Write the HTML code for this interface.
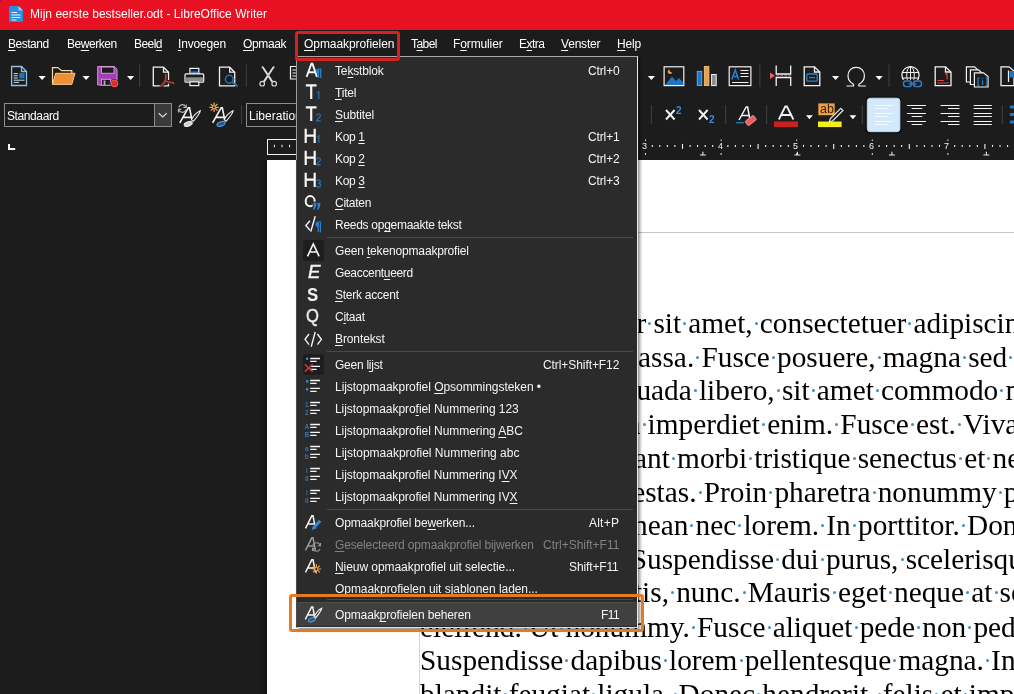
<!DOCTYPE html>
<html><head><meta charset="utf-8"><title>LibreOffice Writer</title>
<style>
*{margin:0;padding:0;box-sizing:border-box}
html,body{width:1014px;height:694px;overflow:hidden;background:#1c1c1c}
body{position:relative;font-family:"Liberation Sans",sans-serif;font-size:12px;color:#fff}
.abs{position:absolute}
.t{will-change:transform;position:absolute;white-space:pre;line-height:14px;height:14px;color:#fff;font-size:12px}
.t u{text-decoration:underline;text-decoration-thickness:1.2px;text-underline-offset:2.2px}
svg{position:absolute;overflow:visible}
#title{left:0;top:0;width:1014px;height:30px;background:#e81123}
#page{left:267px;top:160px;width:760px;height:540px;background:#fff}
.dl{will-change:transform;position:absolute;left:420px;white-space:pre;font-family:"Liberation Serif",serif;font-size:29.33px;line-height:34px;height:34px;color:#000}
.dl i{display:inline-block;width:7.2px;height:0;position:relative;vertical-align:baseline}
.dl i:after{content:"";position:absolute;left:2.1px;top:-10.9px;width:3px;height:3px;border-radius:50%;background:#3f8fc4}
#menu{left:295.5px;top:56px;width:342.5px;height:572px;background:#2b2b2b;border:1px solid;border-color:#a8a8a8 #ececec #e2e2e2 #4a4a4a;box-shadow:2px 2px 3px rgba(0,0,0,.45)}
.sep{position:absolute;height:1px;background:#4a4a4a;left:327px;width:306px}
.vsep{position:absolute;width:1px;background:#4a4a4a}
.arr{position:absolute;width:0;height:0;border-left:3.5px solid transparent;border-right:3.5px solid transparent;border-top:4px solid #fff}
</style></head>
<body>
<div class="abs" id="title"></div>
<svg style="left:0;top:0" width="40" height="30" viewBox="0 0 40 30">
<path d="M10.5 6 H18.5 L23 10.5 V20.5 a1.5 1.5 0 0 1 -1.5 1.5 H10.5 a1.5 1.5 0 0 1 -1.5 -1.5 V7.5 a1.5 1.5 0 0 1 1.5 -1.5Z" fill="#2a8fe0"/>
<path d="M18.5 6 L23 10.5 H19.5 a1 1 0 0 1 -1 -1Z" fill="#9fd0f5"/>
<path d="M11.5 12.5H17 M11.5 15H20.5 M11.5 17.5H20.5 M11.5 20H16.5" stroke="#e8f4ff" stroke-width="1.2"/>
</svg>
<span class="t" id="t1" style="left:30.0px;top:7.44px;letter-spacing:0.015px;">Mijn eerste bestseller.odt - LibreOffice Writer</span>
<span class="t" id="t2" style="left:8.4px;top:36.54px;letter-spacing:-0.491px;"><u>B</u>estand</span>
<span class="t" id="t3" style="left:66.7px;top:36.54px;letter-spacing:-0.470px;">Be<u>w</u>erken</span>
<span class="t" id="t4" style="left:133.8px;top:36.54px;letter-spacing:-0.550px;">Beel<u>d</u></span>
<span class="t" id="t5" style="left:178.2px;top:36.54px;letter-spacing:-0.170px;"><u>I</u>nvoegen</span>
<span class="t" id="t6" style="left:242.8px;top:36.54px;letter-spacing:-0.355px;"><u>O</u>pmaak</span>
<span class="t" id="t7" style="left:303.5px;top:36.54px;letter-spacing:-0.065px;"><u>O</u>pmaakprofielen</span>
<span class="t" id="t8" style="left:410.7px;top:36.54px;letter-spacing:-0.550px;">T<u>a</u>bel</span>
<span class="t" id="t9" style="left:453.3px;top:36.54px;letter-spacing:-0.125px;">F<u>o</u>rmulier</span>
<span class="t" id="t10" style="left:519.0px;top:36.54px;letter-spacing:-0.508px;">E<u>x</u>tra</span>
<span class="t" id="t11" style="left:560.5px;top:36.54px;letter-spacing:-0.201px;"><u>V</u>enster</span>
<span class="t" id="t12" style="left:616.6px;top:36.54px;letter-spacing:-0.196px;"><u>H</u>elp</span>
<svg style="left:0;top:0" width="1014" height="160" viewBox="0 0 1014 160" fill="none">
<!-- ===== toolbar 1 ===== -->
<!-- new doc -->
<path d="M11.6 66.5H21.5L26.5 71.5V85.5H11.6Z" stroke="#8fbfe8" stroke-width="1.3"/>
<path d="M21.5 66.5V71.5H26.5" stroke="#8fbfe8" stroke-width="1.3"/>
<path d="M13.6 73.6H17.8M13.6 75.8H17.8M13.6 78H17.8M13.6 80.2H24.6M13.6 82.4H19" stroke="#c5dcf2" stroke-width="1"/>
<rect x="19.2" y="73" width="5.4" height="5.4" fill="#1f74c4"/>
<path d="M38.5 76H45.7L42.1 80Z" fill="#fff"/>
<!-- folder -->
<path d="M52.5 84.4V67.6H57.8L61.6 70.6H71.8V73.3" stroke="#f5d9a8" stroke-width="1.2"/>
<path d="M55.6 73.3H75L71.8 84.4H52.5Z" fill="#ee8e35" stroke="#f5c98a" stroke-width="1"/>
<path d="M82.5 76H89.7L86.1 80Z" fill="#fff"/>
<!-- save -->
<path d="M97.7 66.5H114.3L117 69.2V85H97.7Z" fill="#a33fb5" stroke="#d29add" stroke-width="1"/>
<rect x="101.4" y="67" width="12.6" height="6.3" fill="#1c1c1c" stroke="#d29add" stroke-width="1"/>
<rect x="101.4" y="79.3" width="9" height="6" fill="#1c1c1c" stroke="#d29add" stroke-width="1"/>
<rect x="103.6" y="80.5" width="1.8" height="4.5" fill="#d29add"/>
<circle cx="114.5" cy="83.5" r="4.3" fill="#1c1c1c"/>
<circle cx="114.5" cy="83.5" r="3.4" fill="#e02a26" stroke="#f07a75" stroke-width=".7"/>
<path d="M127 76H134.2L130.6 80Z" fill="#fff"/>
<path d="M139.7 64.5V87" stroke="#404040" stroke-width="1"/>
<!-- export pdf -->
<path d="M153.3 67.2H163.5L168.5 72.2V85.8H153.3Z" stroke="#f2f2f2" stroke-width="1.3"/>
<path d="M163.5 67.2V72.2H168.5" stroke="#f2f2f2" stroke-width="1.3"/>
<path d="M165.7 74.8C166.3 77.5 165.6 79.8 165 81.2C163.8 83.6 162 85.6 160.3 86.1M165 81.2C167.5 81.6 171 82 173.6 83.2M165 81.2C163 82 161.5 83.2 160.3 84.6" stroke="#1c1c1c" stroke-width="3.6"/>
<path d="M165.7 74.8C166.3 77.5 165.6 79.8 165 81.2C163.8 83.6 162 85.6 160.3 86.1M165 81.2C167.5 81.6 171 82 173.6 83.2" stroke="#b03a35" stroke-width="1.9" stroke-linecap="round"/>
<!-- printer -->
<rect x="189.9" y="68.4" width="8.9" height="6" fill="#1c1c1c" stroke="#f2f2f2" stroke-width="1.2"/>
<rect x="190.5" y="71.5" width="7.7" height="3" fill="#2e86d2"/>
<rect x="185" y="73.9" width="18.7" height="8.3" rx="1" fill="#1c1c1c" stroke="#f2f2f2" stroke-width="1.2"/>
<rect x="185.6" y="77.3" width="17.5" height="4.3" fill="#8c8c8c"/>
<rect x="189.9" y="81.8" width="8.9" height="3.8" fill="#1c1c1c" stroke="#f2f2f2" stroke-width="1.2"/>
<!-- preview -->
<path d="M219.5 67.2H229.7L234.7 72.2V85.8H219.5Z" stroke="#f2f2f2" stroke-width="1.3"/>
<path d="M229.7 67.2V72.2H234.7" stroke="#f2f2f2" stroke-width="1.3"/>
<circle cx="229.3" cy="79.2" r="5" fill="#1c1c1c"/>
<circle cx="229.3" cy="79.2" r="3.9" stroke="#2f6ea6" stroke-width="1.6" fill="#1c1c1c"/>
<path d="M232.2 82.1L237.7 86.6" stroke="#2f6ea6" stroke-width="1.9"/>
<path d="M246.3 64.5V87" stroke="#404040" stroke-width="1"/>
<!-- scissors -->
<path d="M261.8 66.8L263.2 66.8L272.8 81.2L271.6 82Z M274.4 66.8L273 66.8L263.4 81.2L264.6 82Z" fill="#ececec" stroke="#ececec" stroke-width=".6"/>
<circle cx="262.2" cy="83.7" r="2.3" stroke="#d4d4d4" stroke-width="1.2"/>
<circle cx="274.2" cy="83.7" r="2.3" stroke="#d4d4d4" stroke-width="1.2"/>
<!-- copy (partial) -->
<path d="M290.5 66.5H300V79H290.5Z" stroke="#f2f2f2" stroke-width="1.2"/>
<path d="M292.5 70H297M292.5 73H297M292.5 76H297" stroke="#f2f2f2" stroke-width="1"/>
<!-- right side -->
<path d="M647.8 76H655L651.4 80Z" fill="#fff"/>
<!-- image -->
<rect x="664.1" y="66.8" width="19.7" height="18.8" stroke="#f2f2f2" stroke-width="1.2"/>
<path d="M665 85L672 76.5L676 81L679 78L683.2 82.5V85Z" fill="#1f74c4"/>
<path d="M669.5 69.5a2.3 2.3 0 1 0 2.8 2.8a2.6 2.6 0 0 1 -2.8 -2.8Z" fill="#f0a050"/>
<!-- chart -->
<rect x="697.2" y="71.3" width="4.6" height="14.3" fill="#1f74c4" stroke="#7fb6e8" stroke-width=".8"/>
<rect x="704.3" y="66.4" width="4.6" height="19.2" fill="#f09e44" stroke="#f5c98a" stroke-width=".8"/>
<rect x="711.6" y="74.5" width="4.6" height="11.1" fill="#8a8a8a" stroke="#f2f2f2" stroke-width="1"/>
<!-- textbox -->
<rect x="729.2" y="66.8" width="21.7" height="18.8" stroke="#f2f2f2" stroke-width="1.2"/>
<path d="M731.8 79.5L735.2 70L738.6 79.5M733 76.5H737.4" stroke="#2e7fca" stroke-width="1.5"/>
<path d="M740.5 70.5H748.5M740.5 73.5H748.5M740.5 76.5H748.5M732 82.5H748.5" stroke="#f2f2f2" stroke-width="1"/>
<path d="M759.9 64.5V87" stroke="#404040" stroke-width="1"/>
<!-- page break -->
<path d="M776.2 65.5V74H790.7V65.5M776.2 86V77.5H790.7V86" stroke="#f2f2f2" stroke-width="1.3"/>
<path d="M776.5 75.75H791" stroke="#e0605c" stroke-width="1" stroke-dasharray="2.5 1.5"/>
<path d="M770 72.5L775 75.75L770 79Z" fill="#e9605c"/>
<!-- field -->
<path d="M804.2 66.8H814.5L819.8 72V85.6H804.2Z" stroke="#f2f2f2" stroke-width="1.3"/>
<path d="M814.5 66.8V72H819.8" stroke="#f2f2f2" stroke-width="1.3"/>
<rect x="806.8" y="74" width="10.4" height="7.2" rx="1" stroke="#2e7fca" stroke-width="1.3"/>
<path d="M809 77.6H815" stroke="#2e7fca" stroke-width="1.3"/>
<path d="M832 76H839.2L835.6 80Z" fill="#fff"/>
<!-- omega -->
<path d="M846.5 86H853.5V84.2C849.5 82.2 848 79 848 75.8C848 70.5 851.5 67.3 856.2 67.3C860.9 67.3 864.4 70.5 864.4 75.8C864.4 79 862.9 82.2 858.9 84.2V86H865.9" stroke="#f2f2f2" stroke-width="1.2"/>
<path d="M875.5 76H882.7L879.1 80Z" fill="#fff"/>
<path d="M889 64.5V87" stroke="#404040" stroke-width="1"/>
<!-- hyperlink globe -->
<circle cx="910.5" cy="75.2" r="8.6" stroke="#f2f2f2" stroke-width="1.2"/>
<ellipse cx="910.5" cy="75.2" rx="3.8" ry="8.6" stroke="#f2f2f2" stroke-width="1"/>
<path d="M910.5 66.6V83.8M902 72.5H919M902 78H919" stroke="#f2f2f2" stroke-width="1"/>
<rect x="901.5" y="79.8" width="21" height="8.2" fill="#1c1c1c"/>
<rect x="903.5" y="81" width="8" height="5.6" rx="2.5" stroke="#2e7fca" stroke-width="1.4"/>
<rect x="913.5" y="81" width="8" height="5.6" rx="2.5" stroke="#2e7fca" stroke-width="1.4"/>
<path d="M908.5 83.8H916.5" stroke="#2e7fca" stroke-width="1.4"/>
<!-- footnote -->
<path d="M935.2 66.8H945.5L951 72V85.6H935.2Z" stroke="#f2f2f2" stroke-width="1.3"/>
<path d="M945.5 66.8V72H951" stroke="#f2f2f2" stroke-width="1.3"/>
<path d="M945.2 74.5L947 73.5V79.5" stroke="#d9433e" stroke-width="1.2"/>
<path d="M937.5 80.5H944M937.5 83H948.8" stroke="#d9433e" stroke-width="1"/>
<!-- endnote -->
<path d="M966.4 66.8H974.5L978 70V82H966.4Z" stroke="#f2f2f2" stroke-width="1.2" fill="#1c1c1c"/>
<path d="M970.4 69.8H978.5L982 73V84.5H970.4Z" stroke="#f2f2f2" stroke-width="1.2" fill="#1c1c1c"/>
<path d="M974.4 72.8H983.5L988 76.5V87H974.4Z" stroke="#f2f2f2" stroke-width="1.2" fill="#1c1c1c"/>
<path d="M979.5 78H978V85.5H979.5M985.5 78H987V85.5H985.5M982.5 80.5V85M982.5 78V79" stroke="#2e7fca" stroke-width="1.2"/>
<!-- cross-ref partial -->
<path d="M1001 66.8H1009L1014 71V85.6H1001Z" stroke="#f2f2f2" stroke-width="1.3"/>
<path d="M1008.5 70.5V82" stroke="#f2f2f2" stroke-width="1.2"/>
<path d="M1009.5 71H1014V77.5H1009.5Z" fill="#1f74c4"/>

<!-- ===== toolbar 2 ===== -->
<rect x="4.5" y="103.5" width="167" height="23" stroke="#8c8c8c" stroke-width="1" fill="#1c1c1c"/>
<rect x="154.5" y="103.5" width="17" height="23" stroke="#8c8c8c" stroke-width="1" fill="#3a3a3a"/>
<path d="M158.7 113.2L162.7 117L166.7 113.2" stroke="#d8d8d8" stroke-width="1.2"/>
<!-- update style -->
<path d="M179.8 122.8L188.3 107.8H189.5 L191.9 119.6M183 117.4H191.4" stroke="#f4f4f4" stroke-width="1.6"/>
<path d="M191.4 119.7C193.2 116 197.2 112.2 200.3 110.7C199.9 113.8 195.9 118.3 193.2 121.3Z" stroke="#f4f4f4" stroke-width="1.1" fill="#1c1c1c"/>
<ellipse cx="188.2" cy="123.9" rx="4.2" ry="2.1" transform="rotate(-20 188.2 123.9)" fill="#d0d0d0" stroke="#efefef" stroke-width="1.1"/>
<path d="M185.6 106.6A3.7 3.7 0 0 0 178.8 107.3M179 110.2A3.7 3.7 0 0 0 185.9 109.6" stroke="#b4b4b4" stroke-width="1.2"/>
<path d="M186.3 104.4V107.4H183.3M178.4 112.4V109.4H181.4" stroke="#b4b4b4" stroke-width="1.1"/>
<!-- new style -->
<path d="M212.6 122.8L221.1 107.8H222.3 L224.7 119.6M215.8 117.4H224.2" stroke="#f4f4f4" stroke-width="1.6"/>
<path d="M224.2 119.7C226 116 230 112.2 233.1 110.7C232.7 113.8 228.7 118.3 226 121.3Z" stroke="#f4f4f4" stroke-width="1.1" fill="#1c1c1c"/>
<ellipse cx="221" cy="123.9" rx="4.2" ry="2.1" transform="rotate(-20 221 123.9)" fill="#1c568f" stroke="#5a9ede" stroke-width="1.1"/>
<path d="M214.1 102.6V112M209.4 107.3H218.8M210.8 104L217.4 110.6M217.4 104L210.8 110.6" stroke="#e8a05a" stroke-width="1.3"/>
<circle cx="214.1" cy="107.3" r="1.1" fill="#5a3010"/>
<path d="M241.5 105V124" stroke="#404040" stroke-width="1"/>
<rect x="246.5" y="103.5" width="120" height="23" stroke="#8c8c8c" stroke-width="1" fill="#1c1c1c"/>
<!-- right side -->
<path d="M651.4 105V124" stroke="#404040" stroke-width="1"/>
<path d="M725.7 105V124" stroke="#404040" stroke-width="1"/>
<path d="M766.6 105V124" stroke="#404040" stroke-width="1"/>
<path d="M862.3 105V124" stroke="#404040" stroke-width="1"/>
<path d="M1002.3 105V124" stroke="#404040" stroke-width="1"/>
<!-- x2 -->
<path d="M666 110L674.6 119.5M674.6 110L666 119.5" stroke="#f2f2f2" stroke-width="1.9"/>
<path d="M699 110L707.6 119.5M707.6 110L699 119.5" stroke="#f2f2f2" stroke-width="1.9"/>
<!-- clear formatting -->
<path d="M739 120L746.2 107H747.6L750 120M741.8 115.5H749.3" stroke="#f2f2f2" stroke-width="1.5"/>
<path d="M736.2 122.7H744" stroke="#2e7fca" stroke-width="1.3"/>
<rect x="745.5" y="117.8" width="10.5" height="5.6" rx="1.2" transform="rotate(-38 750.7 120.6)" fill="#e9605c" stroke="#f5a09d" stroke-width=".8"/>
<!-- font colour -->
<path d="M778.8 119.5L785.3 106.5H786.9L793.4 119.5M781.3 115H790.9" stroke="#f2f2f2" stroke-width="1.8"/>
<rect x="774" y="121.5" width="24.1" height="5.6" fill="#c9211e"/>
<path d="M806 115.3H812.8L809.4 119.3Z" fill="#fff"/>
<!-- highlight -->
<rect x="818.3" y="103.4" width="16.4" height="11.8" fill="#f09e44"/>
<path d="M840.8 108.3L843 110.5L832.5 121L829.5 121.5L830.2 118.8Z" fill="#1c1c1c" stroke="#e8e8e8" stroke-width="1.2"/>
<rect x="818" y="121.5" width="23.6" height="5.6" fill="#f4ef1c"/>
<path d="M849.5 115.3H856.3L852.9 119.3Z" fill="#fff"/>
<!-- align left (active) -->
<rect x="865.5" y="96.5" width="36" height="37" rx="4" fill="#0c0c0c"/>
<rect x="867.3" y="98.2" width="32.6" height="33.5" rx="3" fill="#d3e8fb" stroke="#b9d9f6" stroke-width="1"/>
<path d="M874 105.5H893M874 108.5H887M874 113.5H893M874 116.5H887M874 121.5H893M874 124.5H887" stroke="#f4faff" stroke-width="1.2"/>
<!-- center -->
<path d="M907 105.5H926M911.6 108.5H922.3M907 113.5H926M911.6 116.5H922.3M907 121.5H926M911.6 124.5H922.3" stroke="#f2f2f2" stroke-width="1.2"/>
<!-- right -->
<path d="M940.5 105.5H959.5M948 108.5H959.5M940.5 113.5H959.5M948 116.5H959.5M940.5 121.5H959.5M948 124.5H959.5" stroke="#f2f2f2" stroke-width="1.2"/>
<!-- justify -->
<path d="M973.6 105.5H991.8M973.6 108.5H991.8M973.6 113.5H991.8M973.6 116.5H991.8M973.6 121.5H991.8M973.6 124.5H991.8" stroke="#f2f2f2" stroke-width="1.2"/>
<!-- list partial -->
<rect x="1009.8" y="105.5" width="5" height="3" fill="#1f74c4"/>
<rect x="1009.8" y="113" width="5" height="3" fill="#1f74c4"/>
<rect x="1009.8" y="120.5" width="5" height="3" fill="#1f74c4"/>
</svg>

<span class="t" id="t13" style="left:7.1px;top:108.54px;letter-spacing:-0.399px;">Standaard</span>
<span class="t" id="t14" style="left:249.2px;top:108.54px;letter-spacing:0.005px;">Liberation Serif</span>
<span class="t" id="t15" style="left:676.2px;top:105.00px;font-size:10px;line-height:11.67px;height:11.67px;color:#3a8ed6;letter-spacing:0.000px;font-weight:bold;">2</span>
<span class="t" id="t16" style="left:708.8px;top:113.90px;font-size:10px;line-height:11.67px;height:11.67px;color:#3a8ed6;letter-spacing:0.000px;font-weight:bold;">2</span>
<span class="t" id="t17" style="left:819.6px;top:101.78px;font-size:12.5px;line-height:14.58px;height:14.58px;color:#3a2208;">ab</span>
<svg style="left:0;top:136px" width="1014" height="24" viewBox="0 136 1014 24" fill="none">
<path d="M9 144V149H15.2" stroke="#f8f8f8" stroke-width="2"/>
<rect x="267.5" y="139.5" width="152" height="15" stroke="#f2f2f2" stroke-width="1"/>
<path d="M274.4 144.7V147.3" stroke="#f2f2f2" stroke-width="1"/>
<path d="M282.0 144.7V147.3" stroke="#f2f2f2" stroke-width="1"/>
<path d="M289.6 144.7V147.3" stroke="#f2f2f2" stroke-width="1"/>
<path d="M652.3 144.9V146.9" stroke="#f2f2f2" stroke-width="1.1"/>
<path d="M659.8 144.9V146.9" stroke="#f2f2f2" stroke-width="1.1"/>
<path d="M667.4 144.9V146.9" stroke="#f2f2f2" stroke-width="1.1"/>
<path d="M674.9 144.9V146.9" stroke="#f2f2f2" stroke-width="1.1"/>
<path d="M682.5 143.9V148.9" stroke="#f2f2f2" stroke-width="1.1"/>
<path d="M690.1 144.9V146.9" stroke="#f2f2f2" stroke-width="1.1"/>
<path d="M697.6 144.9V146.9" stroke="#f2f2f2" stroke-width="1.1"/>
<path d="M705.2 144.9V146.9" stroke="#f2f2f2" stroke-width="1.1"/>
<path d="M712.7 144.9V146.9" stroke="#f2f2f2" stroke-width="1.1"/>
<path d="M727.9 144.9V146.9" stroke="#f2f2f2" stroke-width="1.1"/>
<path d="M735.4 144.9V146.9" stroke="#f2f2f2" stroke-width="1.1"/>
<path d="M743.0 144.9V146.9" stroke="#f2f2f2" stroke-width="1.1"/>
<path d="M750.5 144.9V146.9" stroke="#f2f2f2" stroke-width="1.1"/>
<path d="M758.1 143.9V148.9" stroke="#f2f2f2" stroke-width="1.1"/>
<path d="M765.7 144.9V146.9" stroke="#f2f2f2" stroke-width="1.1"/>
<path d="M773.2 144.9V146.9" stroke="#f2f2f2" stroke-width="1.1"/>
<path d="M780.8 144.9V146.9" stroke="#f2f2f2" stroke-width="1.1"/>
<path d="M788.3 144.9V146.9" stroke="#f2f2f2" stroke-width="1.1"/>
<path d="M803.5 144.9V146.9" stroke="#f2f2f2" stroke-width="1.1"/>
<path d="M811.0 144.9V146.9" stroke="#f2f2f2" stroke-width="1.1"/>
<path d="M818.6 144.9V146.9" stroke="#f2f2f2" stroke-width="1.1"/>
<path d="M826.1 144.9V146.9" stroke="#f2f2f2" stroke-width="1.1"/>
<path d="M833.7 143.9V148.9" stroke="#f2f2f2" stroke-width="1.1"/>
<path d="M841.3 144.9V146.9" stroke="#f2f2f2" stroke-width="1.1"/>
<path d="M848.8 144.9V146.9" stroke="#f2f2f2" stroke-width="1.1"/>
<path d="M856.4 144.9V146.9" stroke="#f2f2f2" stroke-width="1.1"/>
<path d="M863.9 144.9V146.9" stroke="#f2f2f2" stroke-width="1.1"/>
<path d="M879.1 144.9V146.9" stroke="#f2f2f2" stroke-width="1.1"/>
<path d="M886.6 144.9V146.9" stroke="#f2f2f2" stroke-width="1.1"/>
<path d="M894.2 144.9V146.9" stroke="#f2f2f2" stroke-width="1.1"/>
<path d="M901.7 144.9V146.9" stroke="#f2f2f2" stroke-width="1.1"/>
<path d="M909.3 143.9V148.9" stroke="#f2f2f2" stroke-width="1.1"/>
<path d="M916.9 144.9V146.9" stroke="#f2f2f2" stroke-width="1.1"/>
<path d="M924.4 144.9V146.9" stroke="#f2f2f2" stroke-width="1.1"/>
<path d="M932.0 144.9V146.9" stroke="#f2f2f2" stroke-width="1.1"/>
<path d="M939.5 144.9V146.9" stroke="#f2f2f2" stroke-width="1.1"/>
<path d="M954.7 144.9V146.9" stroke="#f2f2f2" stroke-width="1.1"/>
<path d="M962.2 144.9V146.9" stroke="#f2f2f2" stroke-width="1.1"/>
<path d="M969.8 144.9V146.9" stroke="#f2f2f2" stroke-width="1.1"/>
<path d="M977.3 144.9V146.9" stroke="#f2f2f2" stroke-width="1.1"/>
<path d="M984.9 143.9V148.9" stroke="#f2f2f2" stroke-width="1.1"/>
<path d="M992.5 144.9V146.9" stroke="#f2f2f2" stroke-width="1.1"/>
<path d="M1000.0 144.9V146.9" stroke="#f2f2f2" stroke-width="1.1"/>
<path d="M1007.6 144.9V146.9" stroke="#f2f2f2" stroke-width="1.1"/>
<path d="M645.5 139.5V141M645.5 153V155" stroke="#e0e0e0" stroke-width="1"/>
<path d="M721.1 139.5V141M721.1 153V155" stroke="#e0e0e0" stroke-width="1"/>
<path d="M796.7 139.5V141M796.7 153V155" stroke="#e0e0e0" stroke-width="1"/>
<path d="M872.3 139.5V141M872.3 153V155" stroke="#e0e0e0" stroke-width="1"/>
<path d="M947.9 139.5V141M947.9 153V155" stroke="#e0e0e0" stroke-width="1"/>
<path d="M702.9 151.8V155.2M699.9 155H705.9" stroke="#e8e8e8" stroke-width="1.1"/>
<path d="M797.4 151.8V155.2M794.4 155H800.4" stroke="#e8e8e8" stroke-width="1.1"/>
<path d="M891.9 151.8V155.2M888.9 155H894.9" stroke="#e8e8e8" stroke-width="1.1"/>
<path d="M986.4 151.8V155.2M983.4 155H989.4" stroke="#e8e8e8" stroke-width="1.1"/>
</svg>
<span class="t" id="t18" style="left:642.0px;top:140.53px;font-size:9px;line-height:10.50px;height:10.50px;color:#f2f2f2;">3</span>
<span class="t" id="t19" style="left:717.5px;top:140.53px;font-size:9px;line-height:10.50px;height:10.50px;color:#f2f2f2;">4</span>
<span class="t" id="t20" style="left:793.1px;top:140.53px;font-size:9px;line-height:10.50px;height:10.50px;color:#f2f2f2;">5</span>
<span class="t" id="t21" style="left:868.6px;top:140.53px;font-size:9px;line-height:10.50px;height:10.50px;color:#f2f2f2;">6</span>
<span class="t" id="t22" style="left:944.2px;top:140.53px;font-size:9px;line-height:10.50px;height:10.50px;color:#f2f2f2;">7</span>
<div class="abs" style="left:258px;top:160px;width:9px;height:540px;background:linear-gradient(to right,#1c1c1c,#121212)"></div>
<div class="abs" id="page"></div>
<div class="abs" style="left:419px;top:232px;width:600px;height:1px;background:#c6c6c6"></div>
<div class="abs" style="left:419px;top:232px;width:1px;height:470px;background:#d4d4d4"></div>
<div class="dl" style="top:305.60px">Lorem<i></i>ipsum<i></i>dolor<i></i>sit<i></i>amet,<i></i>consectetuer<i></i>adipiscing<i></i>elit.<i></i>Maecenas</div>
<div class="dl" style="top:340.33px">porttitor<i></i>congue<i></i>massa.<i></i>Fusce<i></i>posuere,<i></i>magna<i></i>sed<i></i>pulvinar<i></i>ultricies,</div>
<div class="dl" style="top:373.06px">purus<i></i>lectus<i></i>malesuada<i></i>libero,<i></i>sit<i></i>amet<i></i>commodo<i></i>magna<i></i>eros<i></i>quis</div>
<div class="dl" style="top:406.79px">urna.<i></i>Nunc<i></i>viverra<i></i>imperdiet<i></i>enim.<i></i>Fusce<i></i>est.<i></i>Vivamus<i></i>a<i></i>tellus.</div>
<div class="dl" style="top:440.52px">Pellentesque<i></i>habitant<i></i>morbi<i></i>tristique<i></i>senectus<i></i>et<i></i>netus<i></i>et<i></i>malesuada</div>
<div class="dl" style="top:475.25px">fames<i></i>ac<i></i>turpis<i></i>egestas.<i></i>Proin<i></i>pharetra<i></i>nonummy<i></i>pede.</div>
<div class="dl" style="top:507.98px">Mauris<i></i>et<i></i>orci.<i></i>Aenean<i></i>nec<i></i>lorem.<i></i>In<i></i>porttitor.<i></i>Donec<i></i>laoreet</div>
<div class="dl" style="top:541.71px">nonummy<i></i>augue.<i></i>Suspendisse<i></i>dui<i></i>purus,<i></i>scelerisque<i></i>at,<i></i>vulputate</div>
<div class="dl" style="top:575.44px">vitae,<i></i>pretium<i></i>mattis,<i></i>nunc.<i></i>Mauris<i></i>eget<i></i>neque<i></i>at<i></i>sem<i></i>venenatis</div>
<div class="dl" style="top:610.17px">eleifend.<i></i>Ut<i></i>nonummy.<i></i>Fusce<i></i>aliquet<i></i>pede<i></i>non<i></i>pede.</div>
<div class="dl" style="top:642.90px">Suspendisse<i></i>dapibus<i></i>lorem<i></i>pellentesque<i></i>magna.<i></i>Integer<i></i>nulla.<i></i>Donec</div>
<div class="dl" style="top:676.63px">blandit<i></i>feugiat<i></i>ligula.<i></i>Donec<i></i>hendrerit,<i></i>felis<i></i>et<i></i>imperdiet<i></i>euismod,</div>
<div class="abs" id="menu"></div>
<div class="abs" style="left:295.5px;top:57px;width:1px;height:103px;background:#9c9c9c"></div>
<div class="abs" style="left:296.5px;top:602px;width:340.5px;height:23.5px;border-radius:2px;background:#404040;border-top:1px solid #4c4c4c"></div>
<div class="abs" style="left:302.5px;top:239.5px;width:21px;height:21px;border-radius:3px;background:#1d1d1d"></div>
<div class="abs" style="left:302.5px;top:353.5px;width:21px;height:21px;border-radius:3px;background:#1d1d1d"></div>
<div class="sep" style="top:237px"></div>
<div class="sep" style="top:351px"></div>
<div class="sep" style="top:509px"></div>
<div class="sep" style="top:599px"></div>
<span class="t" id="t23" style="left:335.3px;top:64.14px;color:#f4f4f4;letter-spacing:-0.156px;">Te<u>k</u>stblok</span>
<span class="t" id="t24" style="left:587.5px;top:64.14px;color:#f4f4f4;letter-spacing:-0.129px;">Ctrl+0</span>
<span class="t" id="t25" style="left:335.3px;top:86.14px;color:#f4f4f4;letter-spacing:-0.209px;"><u>T</u>itel</span>
<span class="t" id="t26" style="left:335.3px;top:108.14px;color:#f4f4f4;letter-spacing:-0.121px;"><u>S</u>ubtitel</span>
<span class="t" id="t27" style="left:335.3px;top:130.14px;color:#f4f4f4;letter-spacing:-0.344px;">Kop <u>1</u></span>
<span class="t" id="t28" style="left:587.5px;top:130.14px;color:#f4f4f4;letter-spacing:-0.129px;">Ctrl+1</span>
<span class="t" id="t29" style="left:335.3px;top:152.14px;color:#f4f4f4;letter-spacing:-0.344px;">Kop <u>2</u></span>
<span class="t" id="t30" style="left:587.5px;top:152.14px;color:#f4f4f4;letter-spacing:-0.129px;">Ctrl+2</span>
<span class="t" id="t31" style="left:335.3px;top:174.14px;color:#f4f4f4;letter-spacing:-0.344px;">Kop <u>3</u></span>
<span class="t" id="t32" style="left:587.5px;top:174.14px;color:#f4f4f4;letter-spacing:-0.129px;">Ctrl+3</span>
<span class="t" id="t33" style="left:335.3px;top:196.14px;color:#f4f4f4;letter-spacing:-0.289px;"><u>C</u>itaten</span>
<span class="t" id="t34" style="left:335.3px;top:218.14px;color:#f4f4f4;letter-spacing:-0.279px;">Reeds op<u>g</u>emaakte tekst</span>
<span class="t" id="t35" style="left:335.3px;top:244.14px;color:#f4f4f4;letter-spacing:-0.157px;">Geen <u>t</u>ekenopmaakprofiel</span>
<span class="t" id="t36" style="left:335.3px;top:266.14px;color:#f4f4f4;letter-spacing:-0.324px;">Geaccent<u>u</u>eerd</span>
<span class="t" id="t37" style="left:335.3px;top:288.14px;color:#f4f4f4;letter-spacing:-0.247px;"><u>S</u>terk accent</span>
<span class="t" id="t38" style="left:335.3px;top:310.14px;color:#f4f4f4;letter-spacing:-0.272px;">C<u>i</u>taat</span>
<span class="t" id="t39" style="left:335.3px;top:332.14px;color:#f4f4f4;letter-spacing:-0.113px;"><u>B</u>rontekst</span>
<span class="t" id="t40" style="left:335.3px;top:358.14px;color:#f4f4f4;letter-spacing:-0.259px;">Geen l<u>i</u>jst</span>
<span class="t" id="t41" style="left:542.8px;top:358.14px;color:#f4f4f4;letter-spacing:-0.075px;">Ctrl+Shift+F12</span>
<span class="t" id="t42" style="left:335.3px;top:380.14px;color:#f4f4f4;letter-spacing:-0.047px;">Lijstopmaakprofiel <u>O</u>psommingsteken •</span>
<span class="t" id="t43" style="left:335.3px;top:402.14px;color:#f4f4f4;letter-spacing:-0.056px;">Lijstopmaakpro<u>f</u>iel Nummering 123</span>
<span class="t" id="t44" style="left:335.3px;top:424.14px;color:#f4f4f4;letter-spacing:-0.050px;">Lijstopmaakprofiel Nummering <u>A</u>BC</span>
<span class="t" id="t45" style="left:335.3px;top:446.14px;color:#f4f4f4;letter-spacing:-0.012px;">Li<u>j</u>stopmaakprofiel Nummering abc</span>
<span class="t" id="t46" style="left:335.3px;top:468.14px;color:#f4f4f4;letter-spacing:-0.070px;">Lijstopmaakprofiel Nummering I<u>V</u>X</span>
<span class="t" id="t47" style="left:335.3px;top:490.14px;color:#f4f4f4;letter-spacing:-0.070px;">Lijstopmaakprofiel Nummering IV<u>X</u></span>
<span class="t" id="t48" style="left:335.3px;top:516.14px;color:#f4f4f4;letter-spacing:-0.143px;">Opmaakprofiel be<u>w</u>erken...</span>
<span class="t" id="t49" style="left:589.3px;top:516.14px;color:#f4f4f4;letter-spacing:0.221px;">Alt+P</span>
<span class="t" id="t50" style="left:335.3px;top:538.14px;color:#828282;letter-spacing:-0.149px;"><u>G</u>eselecteerd opmaakprofiel bijwerken</span>
<span class="t" id="t51" style="left:542.8px;top:538.14px;color:#828282;letter-spacing:-0.006px;">Ctrl+Shift+F11</span>
<span class="t" id="t52" style="left:335.3px;top:560.14px;color:#f4f4f4;letter-spacing:-0.059px;"><u>N</u>ieuw opmaakprofiel uit selectie...</span>
<span class="t" id="t53" style="left:569.4px;top:560.14px;color:#f4f4f4;letter-spacing:-0.127px;">Shift+F11</span>
<span class="t" id="t54" style="left:335.3px;top:582.14px;color:#f4f4f4;letter-spacing:-0.052px;">Opmaakprofielen uit s<u>j</u>ablonen laden...</span>
<span class="t" id="t55" style="left:335.3px;top:607.94px;color:#f4f4f4;letter-spacing:-0.131px;">Opmaak<u>p</u>rofielen beheren</span>
<span class="t" id="t56" style="left:600.8px;top:607.94px;color:#f4f4f4;letter-spacing:-0.550px;">F11</span>
<svg style="left:296px;top:56px" width="40" height="575" viewBox="296 56 40 575" fill="none">
<!-- A para -->
<path d="M306.6 76.9L311.4 63.6H312.4L317 76.9M308.3 72.3H315.4" stroke="#f6f6f6" stroke-width="1.9"/>
<path d="M320.7 69V78M318.6 69V78" stroke="#2f7fc8" stroke-width="1.3"/><path d="M318.6 68.8H321.5M318.6 68.9a2.3 2.3 0 0 0 0 4.7Z" fill="#2f7fc8" stroke="#2f7fc8" stroke-width=".8"/>
<!-- T1 -->
<path d="M305.8 85.4H316.6M311.2 85.4V98.9" stroke="#f6f6f6" stroke-width="2.2"/>
<path d="M317 93L318.8 91.8V98.9" stroke="#2b68a2" stroke-width="1.4"/>
<!-- T2 -->
<path d="M305.8 107.4H316.6M311.2 107.4V120.9" stroke="#f6f6f6" stroke-width="2.2"/>
<path d="M316.6 115.5c.5-2.3 3.8-2.1 3.8.2c0 1.7-3.8 3.4-3.8 5.1H320.6" stroke="#2b68a2" stroke-width="1.4"/>
<!-- H1 -->
<path d="M305.7 128.7V143M314.7 128.7V143M305.7 135.6H314.7" stroke="#f6f6f6" stroke-width="2.2"/>
<path d="M317 137L318.8 135.8V143" stroke="#2b68a2" stroke-width="1.4"/>
<!-- H2 -->
<path d="M305.7 150.7V165M314.7 150.7V165M305.7 157.6H314.7" stroke="#f6f6f6" stroke-width="2.2"/>
<path d="M316.6 159.5c.5-2.3 3.8-2.1 3.8.2c0 1.7-3.8 3.4-3.8 5.1H320.6" stroke="#2b68a2" stroke-width="1.4"/>
<!-- H3 -->
<path d="M305.7 172.7V187M314.7 172.7V187M305.7 179.6H314.7" stroke="#f6f6f6" stroke-width="2.2"/>
<path d="M316.7 181c.8-1.5 3.6-1.3 3.6.6c0 1.3-1.2 1.8-2.2 1.8c1.2 0 2.5.6 2.5 2c0 2-3.2 2.2-4.1.5" stroke="#2b68a2" stroke-width="1.4"/>
<!-- Q quotes -->
<ellipse cx="310.2" cy="201.2" rx="4.5" ry="5.1" stroke="#f6f6f6" stroke-width="2"/>
<rect x="312.6" y="201.6" width="8.6" height="9" fill="#2b2b2b"/>
<path d="M313.4 202.8h2.9v3l-1.7 3.7h-1.7l1.2-3.7h-.7ZM317.4 202.8h2.9v3l-1.7 3.7h-1.7l1.2-3.7h-.7Z" fill="#2f7fc8"/>
<!-- </ para -->
<path d="M310 220.8L305.8 225.5L310 230.2M315.2 216.3L310.8 231.6" stroke="#f6f6f6" stroke-width="1.4"/>
<path d="M320.4 222V232.2M318.2 222V232.2" stroke="#2f7fc8" stroke-width="1.3"/><path d="M318.2 221.8H321.2M318.2 221.9a2.4 2.4 0 0 0 0 4.9Z" fill="#2f7fc8" stroke="#2f7fc8" stroke-width=".8"/>
<!-- A -->
<path d="M307.5 256.4L313.3 243.8L319.1 256.4M309.5 252H317.1" stroke="#f4f4f4" stroke-width="1.6"/>
<!-- </> -->
<path d="M309 334L305 339.3L309 344.6M317.4 334L321.4 339.3L317.4 344.6M315.2 332L311.2 346.7" stroke="#f6f6f6" stroke-width="1.35"/>
<path d="M310.2 358.5H320M310.2 361.4H316.6M310.2 366.4H320M310.2 369.3H316.6" stroke="#f4f4f4" stroke-width="1.3"/>
<rect x="306" y="357.6" width="2.2" height="2.2" fill="#3a8ed6"/>
<path d="M304.8 364.2L312.6 371.6M312.6 364.2L304.8 371.6" stroke="#c93a36" stroke-width="1.5"/>
<path d="M310.2 380.5H320M310.2 383.4H316.6M310.2 388.4H320M310.2 391.3H316.6" stroke="#f4f4f4" stroke-width="1.3"/>
<rect x="306" y="380.2" width="2.3" height="2.3" fill="#3a8ed6"/><rect x="306" y="388.2" width="2.3" height="2.3" fill="#3a8ed6"/>
<path d="M310.2 402.5H320M310.2 405.4H316.6M310.2 410.4H320M310.2 413.3H316.6" stroke="#f4f4f4" stroke-width="1.3"/>
<text x="306.8" y="406.7" text-anchor="middle" font-family="Liberation Sans, sans-serif" font-size="6.5" font-weight="bold" fill="#2f74b4">1</text><text x="306.8" y="414.7" text-anchor="middle" font-family="Liberation Sans, sans-serif" font-size="6.5" font-weight="bold" fill="#2f74b4">2</text>
<path d="M310.2 424.5H320M310.2 427.4H316.6M310.2 432.4H320M310.2 435.3H316.6" stroke="#f4f4f4" stroke-width="1.3"/>
<text x="306.8" y="428.7" text-anchor="middle" font-family="Liberation Sans, sans-serif" font-size="6.5" font-weight="bold" fill="#2f74b4">A</text><text x="306.8" y="436.7" text-anchor="middle" font-family="Liberation Sans, sans-serif" font-size="6.5" font-weight="bold" fill="#2f74b4">B</text>
<path d="M310.2 446.5H320M310.2 449.4H316.6M310.2 454.4H320M310.2 457.3H316.6" stroke="#f4f4f4" stroke-width="1.3"/>
<text x="306.8" y="450.7" text-anchor="middle" font-family="Liberation Sans, sans-serif" font-size="6.5" font-weight="bold" fill="#2f74b4">a</text><text x="306.8" y="458.7" text-anchor="middle" font-family="Liberation Sans, sans-serif" font-size="6.5" font-weight="bold" fill="#2f74b4">b</text>
<path d="M310.2 468.5H320M310.2 471.4H316.6M310.2 476.4H320M310.2 479.3H316.6" stroke="#f4f4f4" stroke-width="1.3"/>
<text x="306.8" y="472.7" text-anchor="middle" font-family="Liberation Sans, sans-serif" font-size="6.5" font-weight="bold" fill="#2f74b4">I</text><text x="306.8" y="480.7" text-anchor="middle" font-family="Liberation Sans, sans-serif" font-size="6.5" font-weight="bold" fill="#2f74b4">II</text>
<path d="M310.2 490.5H320M310.2 493.4H316.6M310.2 498.4H320M310.2 501.3H316.6" stroke="#f4f4f4" stroke-width="1.3"/>
<text x="306.8" y="494.7" text-anchor="middle" font-family="Liberation Sans, sans-serif" font-size="6.5" font-weight="bold" fill="#2f74b4">i</text><text x="306.8" y="502.7" text-anchor="middle" font-family="Liberation Sans, sans-serif" font-size="6.5" font-weight="bold" fill="#2f74b4">ii</text>
<!-- edit style -->
<path d="M305.5 528.3L311.8 515.8H313L315.5 528.3M307.7 524H314.7" stroke="#f4f4f4" stroke-width="1.5"/>
<path d="M321.300 521.8L315 528.8L311.700 530.3L312.600 526.8L318.900 519.8Z" fill="#2f86d6"/>
<!-- update style (disabled) -->
<path d="M305.5 550.3L311.8 537.8H313L315.5 550.3M307.7 546H314.7" stroke="#9a9a9a" stroke-width="1.5"/>
<path d="M320.3 545.5a4 4 0 0 0 -7.4 -.5M312.7 548.5a4 4 0 0 0 7.4 .5M320.5 543V545.8H317.8M312.5 551V548.2H315.2" stroke="#9a9a9a" stroke-width="1.1"/>
<!-- new style -->
<path d="M305.5 572.3L311.8 559.8H313L315.5 572.3M307.7 568H314.7" stroke="#f4f4f4" stroke-width="1.5"/>
<path d="M316.4 564.2V573.8M311.6 569H321.2M313 565.6L319.8 572.4M319.8 565.6L313 572.4" stroke="#f09e44" stroke-width="1.2"/>
<circle cx="316.4" cy="569" r="1.6" fill="#2b2b2b" stroke="#f09e44" stroke-width="1"/>
<!-- manage styles -->
<g transform="translate(0 1)">
<path d="M305.3 618.3L311.6 606H312.8L315 618.3M307.5 614H314.5" stroke="#f4f4f4" stroke-width="1.5"/>
<path d="M314.4 615.2C316 611.8 319.2 608.4 321.8 607.2C321.3 610.2 318 614 315.8 616.6Z" stroke="#f4f4f4" stroke-width="1.1" fill="#404040"/>
<ellipse cx="311.8" cy="618.8" rx="3.5" ry="1.8" transform="rotate(-20 311.8 618.8)" fill="#1c568f" stroke="#5a9ede" stroke-width="1"/>
</g>
</svg>

<span class="t" style="left:307.5px;top:261.2px;font-size:18.5px;line-height:22px;height:22px;font-style:italic;-webkit-text-stroke:.45px #f4f4f4;color:#f4f4f4">E</span>
<span class="t" style="left:307.2px;top:283.7px;font-size:18.5px;line-height:22px;height:22px;font-weight:bold;transform:scaleX(.9);transform-origin:0 0;color:#f4f4f4">S</span>
<span class="t" style="left:306.2px;top:305.3px;font-size:18px;line-height:22px;height:22px;color:#f4f4f4;-webkit-text-stroke:.4px #f4f4f4;transform:scaleX(.92);transform-origin:0 0">Q</span>
<div class="abs" style="left:294.5px;top:30.5px;width:105.5px;height:30.2px;border:3.6px solid #d5211f;border-radius:3px"></div>
<div class="abs" style="left:0;top:0;width:1px;height:1px;background:#7a0a6a"></div>
<div class="abs" style="left:289px;top:594px;width:355px;height:38px;border:3.5px solid #e47a22;border-radius:3px"></div>
</body></html>
